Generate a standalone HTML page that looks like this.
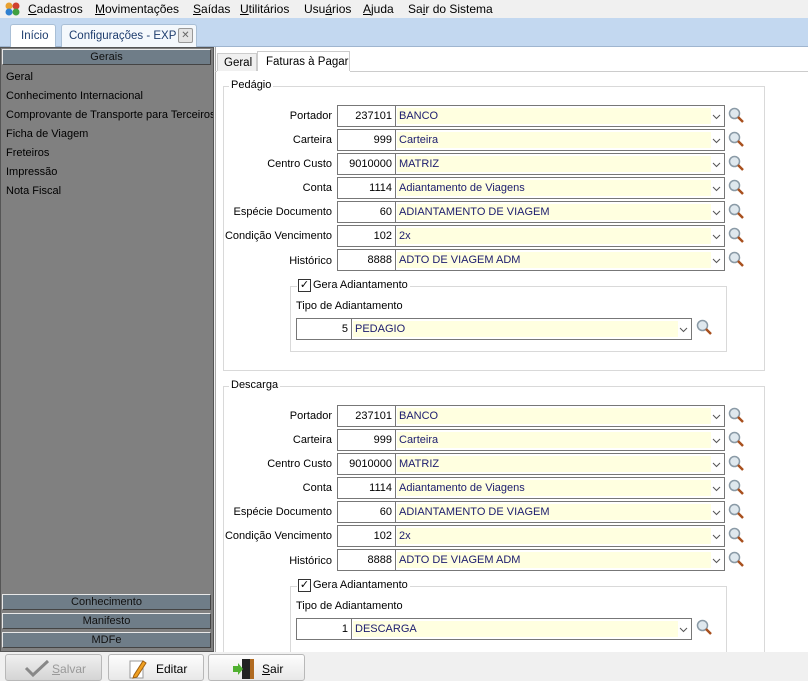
<!DOCTYPE html>
<html><head><meta charset="utf-8"><style>
*{margin:0;padding:0;box-sizing:border-box}
body{width:808px;height:681px;overflow:hidden;background:#f0f0f0;font-family:"Liberation Sans",sans-serif;font-size:11px;color:#000;position:relative}
.a{position:absolute}
.menu{left:0;top:0;width:808px;height:18px;background:#f0f0f0;font-size:12px}
.menu span{position:absolute;top:2px}
.tabbar{left:0;top:18px;width:808px;height:29px;background:#c3d8f0;border-bottom:1px solid #9fb5cf}
.tab{height:23px;background:#f4f8fc;border:1px solid #a9bfd6;border-bottom:none;border-radius:3px 3px 0 0;font-size:11.5px;color:#1e3d6e;padding-top:5px;white-space:nowrap}
.left{left:0;top:47px;width:214px;height:605px;background:#808080;border:1px solid #555}
.hdr{left:2px;width:209px;height:16px;background:#6f7d88;border:1px solid #dcdcdc;border-color:#e8e8e8 #444 #444 #e8e8e8;text-align:center;font-size:11px;padding-top:1px;color:#111}
.li{left:6px;font-size:11px;color:#000}
.right{left:215px;top:47px;width:593px;height:605px;background:#fff;border-left:1px solid #aaa}
.ptab{top:51px;height:20px;border:1px solid #ccc;border-bottom:none;font-size:11.5px;padding:4px 0 0 6px}
.grp{border:1px solid #d9d9d9}
.gt{background:#fff;padding:0 2px;font-size:11px}
.lbl{width:110px;text-align:right;font-size:11px}
.code{width:59px;height:22px;border:1px solid #777;background:#fff;text-align:right;padding:4px 3px 0 0}
.cmb{height:22px;border:1px solid #777;border-left:none;background:#fff}
.cmb .f{position:absolute;left:1px;top:2px;bottom:2px;right:13px;background:#ffffe0;padding:2px 0 0 2px;color:#1c1c6e}
.cmb svg{position:absolute;right:3px;top:8px}
.mag{width:17px;height:17px}
.bar{left:0;top:652px;width:808px;height:29px;background:#f0f0f0}
.btn{top:654px;height:27px;border:1px solid #b8b8b8;border-radius:3px;background:linear-gradient(#fdfdfd,#e8e8e8);font-size:12px}
</style></head><body>
<div class="a menu">
<svg class="a" style="left:4px;top:1px" width="17" height="16"><circle cx="5" cy="5" r="3.5" fill="#e8a030"/><circle cx="12" cy="5" r="3.5" fill="#d04030"/><circle cx="5" cy="11" r="3.5" fill="#3080d0"/><circle cx="12" cy="11" r="3.5" fill="#40a040"/></svg>
<span style="left:28px"><u>C</u>adastros</span>
<span style="left:95px"><u>M</u>ovimentações</span>
<span style="left:193px"><u>S</u>aídas</span>
<span style="left:240px"><u>U</u>tilitários</span>
<span style="left:304px">Usu<u>á</u>rios</span>
<span style="left:363px"><u>A</u>juda</span>
<span style="left:408px">Sa<u>i</u>r do Sistema</span>
</div>
<div class="a tabbar"></div>
<div class="a tab" style="left:10px;top:24px;width:46px;padding-left:10px;background:#fff">Início</div>
<div class="a tab" style="left:61px;top:24px;width:136px;padding-left:7px">Configurações - EXP<span class="a" style="left:116px;top:3px;width:15px;height:15px;border:1px solid #999;border-radius:2px;background:#e4e4e4;font-size:10px;text-align:center;line-height:13px;color:#666">✕</span></div>

<div class="a left"></div>
<div class="a hdr" style="top:49px">Gerais</div>
<div class="a li" style="top:71px">Geral</div>
<div class="a li" style="top:90px">Conhecimento Internacional</div>
<div class="a li" style="top:109px;width:207px;overflow:hidden;white-space:nowrap">Comprovante de Transporte para Terceiros</div>
<div class="a li" style="top:128px">Ficha de Viagem</div>
<div class="a li" style="top:147px">Freteiros</div>
<div class="a li" style="top:166px">Impressão</div>
<div class="a li" style="top:185px">Nota Fiscal</div>
<div class="a hdr" style="top:594px">Conhecimento</div>
<div class="a hdr" style="top:613px">Manifesto</div>
<div class="a hdr" style="top:632px">MDFe</div>

<div class="a right"></div>
<div class="a ptab" style="left:217px;width:40px;background:#f0f0f0;top:53px;height:18px;padding-top:3px">Geral</div>
<div class="a ptab" style="left:257px;width:93px;background:#fff;padding-left:8px">Faturas à Pagar</div>
<div class="a" style="left:350px;top:71px;width:458px;border-top:1px solid #ccc"></div>
<div class="a" style="left:215px;top:71px;width:2px;border-top:1px solid #ccc"></div>

<!-- Pedagio -->
<div class="a grp" style="left:223px;top:86px;width:542px;height:285px"></div>
<div class="a gt" style="left:229px;top:79px">Pedágio</div>
<div class="a grp" style="left:290px;top:286px;width:437px;height:66px"></div>
<div class="a gt" style="left:297px;top:279px;padding-left:16px"><span class="a" style="left:1px;top:0;width:13px;height:13px;border:1px solid #333;background:#fff;font-size:11px;line-height:11px;text-align:center">✓</span>Gera Adiantamento</div>
<div class="a" style="left:296px;top:300px">Tipo de Adiantamento</div>
<div class="a code" style="left:296px;top:318px;width:56px">5</div>
<div class="a cmb" style="left:352px;top:318px;width:340px"><div class="f">PEDAGIO</div><svg width="9" height="6"><path d="M1 1l3.5 3.5L8 1" stroke="#555" fill="none"/></svg></div>
<svg class="a mag" style="left:696px;top:319px"><circle cx="6.5" cy="6.5" r="5" fill="#dfe8ee" stroke="#8a9aa6" stroke-width="1.5"/><path d="M10 10l5 5" stroke="#a8501e" stroke-width="2.5"/></svg>

<!-- Descarga -->
<div class="a grp" style="left:223px;top:386px;width:542px;height:270px"></div>
<div class="a gt" style="left:229px;top:379px">Descarga</div>
<div class="a grp" style="left:290px;top:586px;width:437px;height:70px"></div>
<div class="a gt" style="left:297px;top:579px;padding-left:16px"><span class="a" style="left:1px;top:0;width:13px;height:13px;border:1px solid #333;background:#fff;font-size:11px;line-height:11px;text-align:center">✓</span>Gera Adiantamento</div>
<div class="a" style="left:296px;top:600px">Tipo de Adiantamento</div>
<div class="a code" style="left:296px;top:618px;width:56px">1</div>
<div class="a cmb" style="left:352px;top:618px;width:340px"><div class="f">DESCARGA</div><svg width="9" height="6"><path d="M1 1l3.5 3.5L8 1" stroke="#555" fill="none"/></svg></div>
<svg class="a mag" style="left:696px;top:619px"><circle cx="6.5" cy="6.5" r="5" fill="#dfe8ee" stroke="#8a9aa6" stroke-width="1.5"/><path d="M10 10l5 5" stroke="#a8501e" stroke-width="2.5"/></svg>

<!-- rows pedagio -->
<div class="a lbl" style="left:222px;top:110px">Portador</div><div class="a code" style="left:337px;top:105px">237101</div><div class="a cmb" style="left:396px;top:105px;width:329px"><div class="f">BANCO</div><svg width="9" height="6"><path d="M1 1l3.5 3.5L8 1" stroke="#555" fill="none"/></svg></div><svg class="a mag" style="left:728px;top:107px"><circle cx="6.5" cy="6.5" r="5" fill="#dfe8ee" stroke="#8a9aa6" stroke-width="1.5"/><path d="M10 10l5 5" stroke="#a8501e" stroke-width="2.5"/></svg>
<div class="a lbl" style="left:222px;top:134px">Carteira</div><div class="a code" style="left:337px;top:129px">999</div><div class="a cmb" style="left:396px;top:129px;width:329px"><div class="f">Carteira</div><svg width="9" height="6"><path d="M1 1l3.5 3.5L8 1" stroke="#555" fill="none"/></svg></div><svg class="a mag" style="left:728px;top:131px"><circle cx="6.5" cy="6.5" r="5" fill="#dfe8ee" stroke="#8a9aa6" stroke-width="1.5"/><path d="M10 10l5 5" stroke="#a8501e" stroke-width="2.5"/></svg>
<div class="a lbl" style="left:222px;top:158px">Centro Custo</div><div class="a code" style="left:337px;top:153px">9010000</div><div class="a cmb" style="left:396px;top:153px;width:329px"><div class="f">MATRIZ</div><svg width="9" height="6"><path d="M1 1l3.5 3.5L8 1" stroke="#555" fill="none"/></svg></div><svg class="a mag" style="left:728px;top:155px"><circle cx="6.5" cy="6.5" r="5" fill="#dfe8ee" stroke="#8a9aa6" stroke-width="1.5"/><path d="M10 10l5 5" stroke="#a8501e" stroke-width="2.5"/></svg>
<div class="a lbl" style="left:222px;top:182px">Conta</div><div class="a code" style="left:337px;top:177px">1114</div><div class="a cmb" style="left:396px;top:177px;width:329px"><div class="f">Adiantamento de Viagens</div><svg width="9" height="6"><path d="M1 1l3.5 3.5L8 1" stroke="#555" fill="none"/></svg></div><svg class="a mag" style="left:728px;top:179px"><circle cx="6.5" cy="6.5" r="5" fill="#dfe8ee" stroke="#8a9aa6" stroke-width="1.5"/><path d="M10 10l5 5" stroke="#a8501e" stroke-width="2.5"/></svg>
<div class="a lbl" style="left:222px;top:206px">Espécie Documento</div><div class="a code" style="left:337px;top:201px">60</div><div class="a cmb" style="left:396px;top:201px;width:329px"><div class="f">ADIANTAMENTO DE VIAGEM</div><svg width="9" height="6"><path d="M1 1l3.5 3.5L8 1" stroke="#555" fill="none"/></svg></div><svg class="a mag" style="left:728px;top:203px"><circle cx="6.5" cy="6.5" r="5" fill="#dfe8ee" stroke="#8a9aa6" stroke-width="1.5"/><path d="M10 10l5 5" stroke="#a8501e" stroke-width="2.5"/></svg>
<div class="a lbl" style="left:222px;top:230px">Condição Vencimento</div><div class="a code" style="left:337px;top:225px">102</div><div class="a cmb" style="left:396px;top:225px;width:329px"><div class="f">2x</div><svg width="9" height="6"><path d="M1 1l3.5 3.5L8 1" stroke="#555" fill="none"/></svg></div><svg class="a mag" style="left:728px;top:227px"><circle cx="6.5" cy="6.5" r="5" fill="#dfe8ee" stroke="#8a9aa6" stroke-width="1.5"/><path d="M10 10l5 5" stroke="#a8501e" stroke-width="2.5"/></svg>
<div class="a lbl" style="left:222px;top:255px">Histórico</div><div class="a code" style="left:337px;top:249px">8888</div><div class="a cmb" style="left:396px;top:249px;width:329px"><div class="f">ADTO DE VIAGEM ADM</div><svg width="9" height="6"><path d="M1 1l3.5 3.5L8 1" stroke="#555" fill="none"/></svg></div><svg class="a mag" style="left:728px;top:251px"><circle cx="6.5" cy="6.5" r="5" fill="#dfe8ee" stroke="#8a9aa6" stroke-width="1.5"/><path d="M10 10l5 5" stroke="#a8501e" stroke-width="2.5"/></svg>

<!-- rows descarga -->
<div class="a lbl" style="left:222px;top:410px">Portador</div><div class="a code" style="left:337px;top:405px">237101</div><div class="a cmb" style="left:396px;top:405px;width:329px"><div class="f">BANCO</div><svg width="9" height="6"><path d="M1 1l3.5 3.5L8 1" stroke="#555" fill="none"/></svg></div><svg class="a mag" style="left:728px;top:407px"><circle cx="6.5" cy="6.5" r="5" fill="#dfe8ee" stroke="#8a9aa6" stroke-width="1.5"/><path d="M10 10l5 5" stroke="#a8501e" stroke-width="2.5"/></svg>
<div class="a lbl" style="left:222px;top:434px">Carteira</div><div class="a code" style="left:337px;top:429px">999</div><div class="a cmb" style="left:396px;top:429px;width:329px"><div class="f">Carteira</div><svg width="9" height="6"><path d="M1 1l3.5 3.5L8 1" stroke="#555" fill="none"/></svg></div><svg class="a mag" style="left:728px;top:431px"><circle cx="6.5" cy="6.5" r="5" fill="#dfe8ee" stroke="#8a9aa6" stroke-width="1.5"/><path d="M10 10l5 5" stroke="#a8501e" stroke-width="2.5"/></svg>
<div class="a lbl" style="left:222px;top:458px">Centro Custo</div><div class="a code" style="left:337px;top:453px">9010000</div><div class="a cmb" style="left:396px;top:453px;width:329px"><div class="f">MATRIZ</div><svg width="9" height="6"><path d="M1 1l3.5 3.5L8 1" stroke="#555" fill="none"/></svg></div><svg class="a mag" style="left:728px;top:455px"><circle cx="6.5" cy="6.5" r="5" fill="#dfe8ee" stroke="#8a9aa6" stroke-width="1.5"/><path d="M10 10l5 5" stroke="#a8501e" stroke-width="2.5"/></svg>
<div class="a lbl" style="left:222px;top:482px">Conta</div><div class="a code" style="left:337px;top:477px">1114</div><div class="a cmb" style="left:396px;top:477px;width:329px"><div class="f">Adiantamento de Viagens</div><svg width="9" height="6"><path d="M1 1l3.5 3.5L8 1" stroke="#555" fill="none"/></svg></div><svg class="a mag" style="left:728px;top:479px"><circle cx="6.5" cy="6.5" r="5" fill="#dfe8ee" stroke="#8a9aa6" stroke-width="1.5"/><path d="M10 10l5 5" stroke="#a8501e" stroke-width="2.5"/></svg>
<div class="a lbl" style="left:222px;top:506px">Espécie Documento</div><div class="a code" style="left:337px;top:501px">60</div><div class="a cmb" style="left:396px;top:501px;width:329px"><div class="f">ADIANTAMENTO DE VIAGEM</div><svg width="9" height="6"><path d="M1 1l3.5 3.5L8 1" stroke="#555" fill="none"/></svg></div><svg class="a mag" style="left:728px;top:503px"><circle cx="6.5" cy="6.5" r="5" fill="#dfe8ee" stroke="#8a9aa6" stroke-width="1.5"/><path d="M10 10l5 5" stroke="#a8501e" stroke-width="2.5"/></svg>
<div class="a lbl" style="left:222px;top:530px">Condição Vencimento</div><div class="a code" style="left:337px;top:525px">102</div><div class="a cmb" style="left:396px;top:525px;width:329px"><div class="f">2x</div><svg width="9" height="6"><path d="M1 1l3.5 3.5L8 1" stroke="#555" fill="none"/></svg></div><svg class="a mag" style="left:728px;top:527px"><circle cx="6.5" cy="6.5" r="5" fill="#dfe8ee" stroke="#8a9aa6" stroke-width="1.5"/><path d="M10 10l5 5" stroke="#a8501e" stroke-width="2.5"/></svg>
<div class="a lbl" style="left:222px;top:555px">Histórico</div><div class="a code" style="left:337px;top:549px">8888</div><div class="a cmb" style="left:396px;top:549px;width:329px"><div class="f">ADTO DE VIAGEM ADM</div><svg width="9" height="6"><path d="M1 1l3.5 3.5L8 1" stroke="#555" fill="none"/></svg></div><svg class="a mag" style="left:728px;top:551px"><circle cx="6.5" cy="6.5" r="5" fill="#dfe8ee" stroke="#8a9aa6" stroke-width="1.5"/><path d="M10 10l5 5" stroke="#a8501e" stroke-width="2.5"/></svg>

<!-- bottom -->
<div class="a bar"></div>
<div class="a btn" style="left:5px;width:97px;background:linear-gradient(#f0f0f0,#d4d4d4);color:#999"><svg class="a" style="left:18px;top:4px" width="26" height="18"><path d="M2 9l7 7L24 2" stroke="#888" stroke-width="3" fill="none"/></svg><span class="a" style="left:46px;top:7px"><u>S</u>alvar</span></div>
<div class="a btn" style="left:108px;width:96px"><svg class="a" style="left:20px;top:3px" width="18" height="22"><rect x="1" y="3" width="13" height="17" fill="#fff" stroke="#999"/><path d="M5 17l9-14 3 2-9 14-4 1z" fill="#f0a020" stroke="#a06010"/></svg><span class="a" style="left:47px;top:7px">Editar</span></div>
<div class="a btn" style="left:208px;width:97px"><svg class="a" style="left:22px;top:3px" width="26" height="22"><rect x="11" y="1" width="12" height="20" fill="#222"/><rect x="19" y="1" width="4" height="20" fill="#b06a20"/><path d="M2 8h5v-3l5 6-5 6v-3h-5z" fill="#50b030"/></svg><span class="a" style="left:53px;top:7px"><u>S</u>air</span></div>
</body></html>
